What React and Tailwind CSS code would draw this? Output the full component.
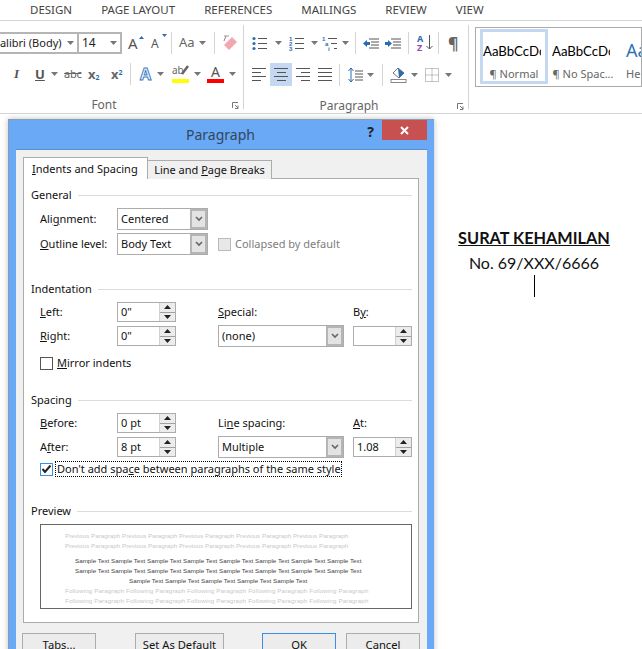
import React from 'react';

const ui = { fontFamily: '"Noto Sans", sans-serif' };

function Caret({ className = '' }) {
  return (
    <svg width="7" height="4" viewBox="0 0 7 4" className={className}>
      <path d="M0 0h7L3.5 4z" fill="#777" />
    </svg>
  );
}

function Lines({ widths, align = 'left', className = '' }) {
  return (
    <div className={`flex flex-col gap-[3px] w-[14px] ${className}`}>
      {widths.map((w, i) => (
        <div
          key={i}
          className={`h-px bg-[#555] ${align === 'center' ? 'self-center' : align === 'right' ? 'self-end' : 'self-start'}`}
          style={{ width: w }}
        />
      ))}
    </div>
  );
}

function GroupLabel({ children, className = '' }) {
  return <div className={`h-[14px] flex items-center justify-center text-[12px] text-[#666] ${className}`}>{children}</div>;
}

function Launcher({ className = '' }) {
  return (
    <svg width="7" height="7" viewBox="0 0 7 7" className={className}>
      <path d="M0.5 6V0.5H6M3 3l3 3M6 3.5V6.5H3" fill="none" stroke="#777" />
    </svg>
  );
}

function Separator({ className = '' }) {
  return <div className={`w-px h-[22px] bg-[#d4d4d4] ${className}`} />;
}

function ListIcon({ marks, indent = [0, 0, 0], className = '' }) {
  return (
    <svg width="16" height="15" viewBox="0 0 16 15" className={className}>
      {[2, 7, 12].map((y, i) => (
        <g key={y}>
          {marks ? (
            <text x={indent[i]} y={y + 2.5} fontSize="6" fontWeight="700" fill="#2a6db5" fontFamily="Liberation Sans">{marks[i]}</text>
          ) : (
            <circle cx="2" cy={y + 0.5} r="1.6" fill="#2a6db5" />
          )}
          <rect x={6 + indent[i]} y={y} width={9 - indent[i]} height="1" fill="#555" />
        </g>
      ))}
    </svg>
  );
}

function FontGroup() {
  return (
    <div className="w-[243px] shrink-0 pt-[11px]">
      <div className="flex items-center h-[22px]">
        <div className="w-[79px] h-[22px] shrink-0 border-2 border-l-0 border-[#b5b5b5] flex items-center overflow-hidden relative text-[11px] text-[#222]">
          <span className="-ml-[7px] whitespace-nowrap">Calibri (Body)</span>
          <Caret className="absolute right-[3px] top-[7px]" />
        </div>
        <div className="w-[43px] h-[22px] shrink-0 border-2 border-l-0 border-[#b5b5b5] flex items-center justify-between pl-[3px] pr-[3px] text-[12px] text-[#222]">
          14
          <Caret />
        </div>
        <div className="ml-[6px] w-[14px] relative text-[15px] leading-none text-[#555]">
          A
          <svg width="5" height="3" className="absolute -right-[2px] top-0"><path d="M0 3h5L2.5 0z" fill="#2a6db5" /></svg>
        </div>
        <div className="ml-[9px] w-[14px] relative text-[12px] leading-none text-[#555] pt-[2px]">
          A
          <svg width="5" height="3" className="absolute -right-[2px] -top-[2px]"><path d="M0 0h5L2.5 3z" fill="#2a6db5" /></svg>
        </div>
        <Separator className="ml-[6px]" />
        <span className="ml-[7px] text-[13px] text-[#666] w-[16px]">Aa</span>
        <Caret className="ml-[4px]" />
        <Separator className="ml-[8px]" />
        <svg width="16" height="16" viewBox="0 0 16 16" className="ml-[8px]">
          <path d="M6 15 1 10 9 2l5 5z" fill="#f2a6ad" />
          <path d="M3 1 1 6" stroke="#b26a8c" fill="none" />
          <path d="M1 1h5" stroke="#999" />
        </svg>
      </div>
      <div className="flex items-center h-[22px] mt-[9px]">
        <span className="ml-[14px] w-[8px] text-[13px] italic font-bold text-[#555] [font-family:'Liberation_Serif']">I</span>
        <span className="ml-[13px] w-[12px] text-[13px] font-bold underline text-[#555] leading-none">U</span>
        <Caret className="ml-[4px]" />
        <span className="ml-[6px] w-[17px] text-[11px] line-through text-[#666] tracking-tight">abc</span>
        <span className="ml-[7px] w-[14px] text-[13px] font-bold text-[#666] leading-none">x<sub className="text-[7px] text-[#2a6db5]">2</sub></span>
        <span className="ml-[9px] w-[14px] text-[13px] font-bold text-[#666] leading-none">x<sup className="text-[7px] text-[#2a6db5]">2</sup></span>
        <Separator className="ml-[5px]" />
        <span className="ml-[9px] w-[14px] text-[16px] font-bold leading-none text-white [-webkit-text-stroke:1px_#3a7cc4]">A</span>
        <Caret className="ml-[3px]" />
        <div className="ml-[8px] w-[17px] h-[18px] relative text-[10px] leading-[10px] text-[#666]">
          ab
          <svg width="9" height="11" className="absolute right-0 top-0"><path d="M8 1 2 9" stroke="#666" strokeWidth="2.5" /></svg>
          <div className="absolute left-0 right-0 bottom-0 h-[4px] bg-[#ffff00]" />
        </div>
        <Caret className="ml-[5px]" />
        <div className="ml-[6px] w-[17px] h-[18px] relative text-center text-[14px] leading-[14px] text-[#555]">
          A
          <div className="absolute left-0 right-0 bottom-0 h-[4px] bg-[#ff0000]" />
        </div>
        <Caret className="ml-[5px]" />
      </div>
      <div className="relative mt-[13px]">
        <GroupLabel className="w-[208px]">Font</GroupLabel>
        <Launcher className="absolute left-[232px] top-[4px]" />
      </div>
    </div>
  );
}

function ParagraphGroup() {
  return (
    <div className="w-[224px] shrink-0 pt-[11px]">
      <div className="flex items-center h-[22px] pl-[8px]">
        <ListIcon />
        <Caret className="ml-[7px]" />
        <ListIcon marks={['1', '2', '3']} className="ml-[7px]" />
        <Caret className="ml-[6px]" />
        <ListIcon marks={['1', 'a', 'i']} indent={[0, 3, 6]} className="ml-[4px]" />
        <Caret className="ml-[4px]" />
        <Separator className="ml-[6px]" />
        <svg width="16" height="12" viewBox="0 0 16 12" className="ml-[7px]">
          <path d="M6 2h10M8 5h8M8 8h8M6 11h10" stroke="#555" />
          <path d="M0 6.5 4 3v2h3v3H4v2z" fill="#2a6db5" />
        </svg>
        <svg width="16" height="12" viewBox="0 0 16 12" className="ml-[6px]">
          <path d="M6 2h10M8 5h8M8 8h8M6 11h10" stroke="#555" />
          <path d="M7 6.5 3 3v2H0v3h3v2z" fill="#2a6db5" />
        </svg>
        <Separator className="ml-[7px]" />
        <div className="ml-[8px] w-[16px] h-[18px] relative text-[9px] leading-[9px] font-bold">
          <span className="text-[#2a6db5] block">A</span>
          <span className="text-[#8a4fb0] block">Z</span>
          <svg width="7" height="16" className="absolute right-0 top-[1px]"><path d="M3.5 0v14M.5 11l3 3 3-3" stroke="#555" fill="none" /></svg>
        </div>
        <Separator className="ml-[5px]" />
        <span className="ml-[9px] text-[16px] leading-none font-bold text-[#666]">¶</span>
      </div>
      <div className="flex items-center h-[23px] mt-[9px] pl-[8px]">
        <Lines widths={[14, 9, 14, 9]} />
        <div className="ml-[4px] w-[22px] h-[23px] bg-[#c5d8f1] flex items-center justify-center">
          <Lines widths={[14, 9, 14, 9]} align="center" />
        </div>
        <Lines widths={[14, 9, 14, 9]} align="right" className="ml-[4px]" />
        <Lines widths={[14, 14, 14, 14]} className="ml-[8px]" />
        <Separator className="ml-[7px]" />
        <svg width="15" height="16" viewBox="0 0 15 16" className="ml-[8px]">
          <path d="M3 1v14M.5 4 3 1l2.5 3M.5 12 3 15l2.5-3" stroke="#2a6db5" fill="none" />
          <path d="M7 4h8M7 7h8M7 10h8M7 13h8" stroke="#555" />
        </svg>
        <Caret className="ml-[4px]" />
        <Separator className="ml-[8px]" />
        <svg width="17" height="17" viewBox="0 0 17 17" className="ml-[7px]">
          <path d="M3 7l5-5 6 5-5 5z" fill="#fff" stroke="#777" />
          <path d="M8 2l6 5-5 5" fill="#2a6db5" />
          <rect x="1" y="13.5" width="15" height="3" fill="#fff" stroke="#888" />
        </svg>
        <Caret className="ml-[4px]" />
        <svg width="14" height="14" viewBox="0 0 14 14" className="ml-[7px]">
          <path d="M.5.5h13v13H.5zM7 .5v13M.5 7h13" fill="none" stroke="#888" strokeDasharray="1 1" />
        </svg>
        <Caret className="ml-[6px]" />
      </div>
      <div className="relative mt-[13px]">
        <GroupLabel className="w-[210px]">Paragraph</GroupLabel>
        <Launcher className="absolute left-[213px] top-[4px]" />
      </div>
    </div>
  );
}

function StyleCard({ sample, label, selected, className = '' }) {
  return (
    <div className={`h-[55px] flex flex-col ${selected ? 'border-[3px] border-[#c5d8f1]' : 'border-[3px] border-transparent'} ${className}`}>
      <div className="mt-[10px] w-[58px] whitespace-nowrap overflow-hidden text-[13.2px] leading-[18px] text-black [font-family:'Lato']">{sample}</div>
      <div className="mt-[7px] text-center text-[11px] leading-[14px] text-[#666] whitespace-nowrap">{label}</div>
    </div>
  );
}

function Ribbon() {
  return (
    <>
      <div className="h-[21px] border-b border-[#d4d4d4] flex items-center pl-[30px] gap-[29px] text-[11.5px] text-[#444] whitespace-nowrap">
        <span>DESIGN</span>
        <span>PAGE LAYOUT</span>
        <span>REFERENCES</span>
        <span>MAILINGS</span>
        <span>REVIEW</span>
        <span>VIEW</span>
      </div>
      <div className="h-[93px] border-b border-[#d4d4d4] flex">
        <FontGroup />
        <div className="w-px h-[84px] mt-[4px] bg-[#d4d4d4] shrink-0" />
        <ParagraphGroup />
        <div className="w-px h-[84px] mt-[4px] bg-[#d4d4d4] shrink-0" />
        <div className="ml-[6px] mt-[6px] w-[180px] h-[60px] border border-[#ababab] flex pl-[4px] pt-[1px] overflow-hidden">
          <StyleCard sample="AaBbCcDc" label="¶ Normal" selected className="w-[68px] shrink-0" />
          <StyleCard sample="AaBbCcDc" label="¶ No Spac..." className="w-[68px] shrink-0 ml-[1px]" />
          <div className="ml-[9px] text-[18px] leading-[26px] mt-[8px] text-[#2e74b5] whitespace-nowrap">
            Aa
            <div className="text-[11px] leading-[14px] mt-[4px] text-[#666]">He</div>
          </div>
        </div>
      </div>
    </>
  );
}

function Document() {
  return (
    <div className="ml-[426px] w-[216px] pt-[112px] flex flex-col items-center text-[#111] [font-family:'Lato']">
      <div className="text-[16.3px] leading-[24px] font-bold underline whitespace-nowrap">SURAT KEHAMILAN</div>
      <div className="text-[16px] leading-[24px] mt-px whitespace-nowrap">No. 69/XXX/6666</div>
      <div className="w-px h-[22px] bg-black" />
    </div>
  );
}

function Heading({ children, className = '' }) {
  return (
    <div className={`h-[14px] flex items-center gap-[6px] pr-[6px] ${className}`}>
      <span className="text-[11px] leading-[14px] text-[#111]">{children}</span>
      <div className="flex-1 h-px bg-[#dcdcdc]" />
    </div>
  );
}

function Label({ children, className = '' }) {
  return <div className={`h-[14px] text-[11px] leading-[14px] whitespace-nowrap text-[#111] ${className}`}>{children}</div>;
}

function Select({ value, width, className = '' }) {
  return (
    <div className={`h-[22px] border border-[#acacac] bg-white flex items-stretch ${className}`} style={{ width }}>
      <div className="flex-1 pl-[3px] text-[11px] leading-[20px] text-[#111]">{value}</div>
      <div className="w-[17px] border-2 border-[#b5b5b5] bg-[#e3e3e3] flex items-center justify-center">
        <svg width="8" height="6" viewBox="0 0 8 6"><path d="M1 1l3 3 3-3" fill="none" stroke="#666" strokeWidth="1.6" /></svg>
      </div>
    </div>
  );
}

function Spinner({ value, className = '' }) {
  return (
    <div className={`w-[59px] h-[20px] border border-[#acacac] bg-white flex ${className}`}>
      <div className="flex-1 pl-[3px] text-[11px] leading-[18px] text-[#111]">{value}</div>
      <div className="w-[16px] flex flex-col bg-[#ececec] border-l border-[#d0d0d0]">
        <div className="flex-1 flex items-center justify-center border-b border-[#a0a0a0]">
          <svg width="7" height="4"><path d="M0 4h7L3.5 0z" fill="#222" /></svg>
        </div>
        <div className="flex-1 flex items-center justify-center">
          <svg width="7" height="4"><path d="M0 0h7L3.5 4z" fill="#222" /></svg>
        </div>
      </div>
    </div>
  );
}

function Preview() {
  const prev = 'Previous Paragraph '.repeat(5);
  const next = 'Following Paragraph '.repeat(5);
  const sample8 = 'Sample Text '.repeat(8);
  const sample5 = 'Sample Text '.repeat(5);
  const row = 'h-[10px] leading-[10px] whitespace-nowrap';
  return (
    <div className="ml-[9px] mt-[6px] w-[372px] h-[85px] border border-[#666] bg-white pl-[24px] pt-[6px] text-[6.25px] [font-family:'Liberation_Sans']">
      <div className={`${row} text-[#c8c8c8]`}>{prev}</div>
      <div className={`${row} text-[#c8c8c8]`}>{prev}</div>
      <div className={`${row} mt-[5px] pl-[10px] text-[#444]`}>{sample8}</div>
      <div className={`${row} pl-[10px] text-[#444]`}>{sample8}</div>
      <div className={`${row} pl-[64px] text-[#444]`}>{sample5}</div>
      <div className={`${row} tracking-[0.1px] text-[#c8c8c8]`}>{next}</div>
      <div className={`${row} tracking-[0.1px] text-[#c8c8c8]`}>{next}</div>
    </div>
  );
}

function Panel() {
  return (
    <div className="w-[396px] h-[445px] border border-[#acacac] bg-white pl-[7px] pt-[9px] -mt-px">
      <Heading>General</Heading>
      <div className="flex mt-[6px] h-[22px] pl-[9px] items-center">
        <Label className="w-[77px]">Ali<u>g</u>nment:</Label>
        <Select value="Centered" width={91} />
      </div>
      <div className="flex mt-[3px] h-[22px] pl-[9px] items-center">
        <Label className="w-[77px]"><u>O</u>utline level:</Label>
        <Select value="Body Text" width={91} />
        <div className="ml-[10px] w-[13px] h-[13px] border border-[#bbb] bg-[#e8e8e8]" />
        <span className="ml-[4px] text-[11px] text-[#7d7d7d]">Collapsed by default</span>
      </div>

      <Heading className="mt-[27px]">Indentation</Heading>
      <div className="flex">
        <div className="w-[187px] pl-[9px]">
          <div className="flex items-center mt-[6px]">
            <Label className="w-[77px]"><u>L</u>eft:</Label>
            <Spinner value='0"' />
          </div>
          <div className="flex items-center mt-[4px]">
            <Label className="w-[77px]"><u>R</u>ight:</Label>
            <Spinner value='0"' />
          </div>
          <div className="flex items-center mt-[11px] h-[13px]">
            <div className="w-[13px] h-[13px] border border-[#555] bg-white" />
            <span className="ml-[4px] text-[11px] text-[#111]"><u>M</u>irror indents</span>
          </div>
        </div>
        <div className="w-[135px]">
          <Label className="mt-[9px]"><u>S</u>pecial:</Label>
          <Select value="(none)" width={126} className="mt-[6px]" />
        </div>
        <div>
          <Label className="mt-[9px]">B<u>y</u>:</Label>
          <Spinner value="" className="mt-[7px]" />
        </div>
      </div>

      <Heading className="mt-[23px]">Spacing</Heading>
      <div className="flex">
        <div className="w-[187px] pl-[9px]">
          <div className="flex items-center mt-[6px]">
            <Label className="w-[77px]"><u>B</u>efore:</Label>
            <Spinner value="0 pt" />
          </div>
          <div className="flex items-center mt-[4px]">
            <Label className="w-[77px]">A<u>f</u>ter:</Label>
            <Spinner value="8 pt" />
          </div>
        </div>
        <div className="w-[135px]">
          <Label className="mt-[9px]">Li<u>n</u>e spacing:</Label>
          <Select value="Multiple" width={126} className="mt-[6px]" />
        </div>
        <div>
          <Label className="mt-[9px]"><u>A</u>t:</Label>
          <Spinner value="1.08" className="mt-[7px]" />
        </div>
      </div>
      <div className="flex items-center mt-[3px] pl-[9px] h-[16px]">
        <div className="w-[13px] h-[13px] border border-[#3c8fe0] bg-white flex items-center justify-center">
          <svg width="11" height="10" viewBox="0 0 11 10"><path d="M1.5 5 4 8 9.5 1.5" fill="none" stroke="#222" strokeWidth="2" /></svg>
        </div>
        <span className="ml-[2px] w-[287px] h-[16px] border border-dotted border-black pl-px text-[11px] leading-[14px] whitespace-nowrap text-[#111]">
          Don't add spa<u>c</u>e between paragraphs of the same style
        </span>
      </div>

      <Heading className="mt-[27px]">Preview</Heading>
      <Preview />
    </div>
  );
}

function ActionButton({ children, primary, className = '' }) {
  return (
    <div className={`h-[26px] shrink-0 bg-[#ececec] border text-center text-[11.2px] leading-[22px] text-[#111] ${primary ? 'border-[#3c8fe0]' : 'border-[#acacac]'} ${className}`}>
      {children}
    </div>
  );
}

function Dialog() {
  return (
    <div className="absolute left-[8px] top-[119px] w-[426px] h-[540px] bg-[#69a9f5] border-t border-l border-[#8a9cb0] shadow-[0_0_6px_rgba(0,0,0,0.25)] flex flex-col">
      <div className="h-[29px] shrink-0 relative flex justify-end">
        <span className="absolute left-0 right-0 top-[5px] text-center text-[14px] leading-[20px] text-[#33475c] pr-[2px]">Paragraph</span>
        <span className="relative text-[14px] font-bold leading-[24px] text-[#222] mr-[10px]">?</span>
        <div className="relative w-[45px] h-[20px] mr-[5px] -translate-x-[2px] bg-[#c75050] flex items-center justify-center">
          <svg width="9" height="9" viewBox="0 0 9 9"><path d="M1 1l7 7M8 1 1 8" stroke="#fff" strokeWidth="2" /></svg>
        </div>
      </div>
      <div className="ml-[7px] w-[411px] flex-1 bg-[#f0f0f0] border-t border-[#5a8fd0] pl-[7px] pt-[7px]">
        <div className="flex items-end relative z-10">
          <div className="w-[125px] h-[22px] border border-b-0 border-[#acacac] bg-white pl-[8px] text-[11px] leading-[21px] text-[#111]">
            <u>I</u>ndents and Spacing
          </div>
          <div className="w-[124px] h-[19px] border border-l-0 border-b-0 border-[#acacac] bg-[#f0f0f0] text-center text-[11px] leading-[17px] text-[#111]">
            Line and <u>P</u>age Breaks
          </div>
        </div>
        <Panel />
        <div className="flex mt-[10px] -ml-px">
          <ActionButton className="w-[74px]">Tabs...</ActionButton>
          <ActionButton className="w-[89px] ml-[39px]">Set As Default</ActionButton>
          <ActionButton primary className="w-[74px] ml-[38px]">OK</ActionButton>
          <ActionButton className="w-[74px] ml-[10px]">Cancel</ActionButton>
        </div>
      </div>
    </div>
  );
}

export default function App() {
  return (
    <div className="relative w-[642px] h-[649px] overflow-hidden bg-white" style={ui}>
      <Ribbon />
      <Document />
      <Dialog />
    </div>
  );
}
